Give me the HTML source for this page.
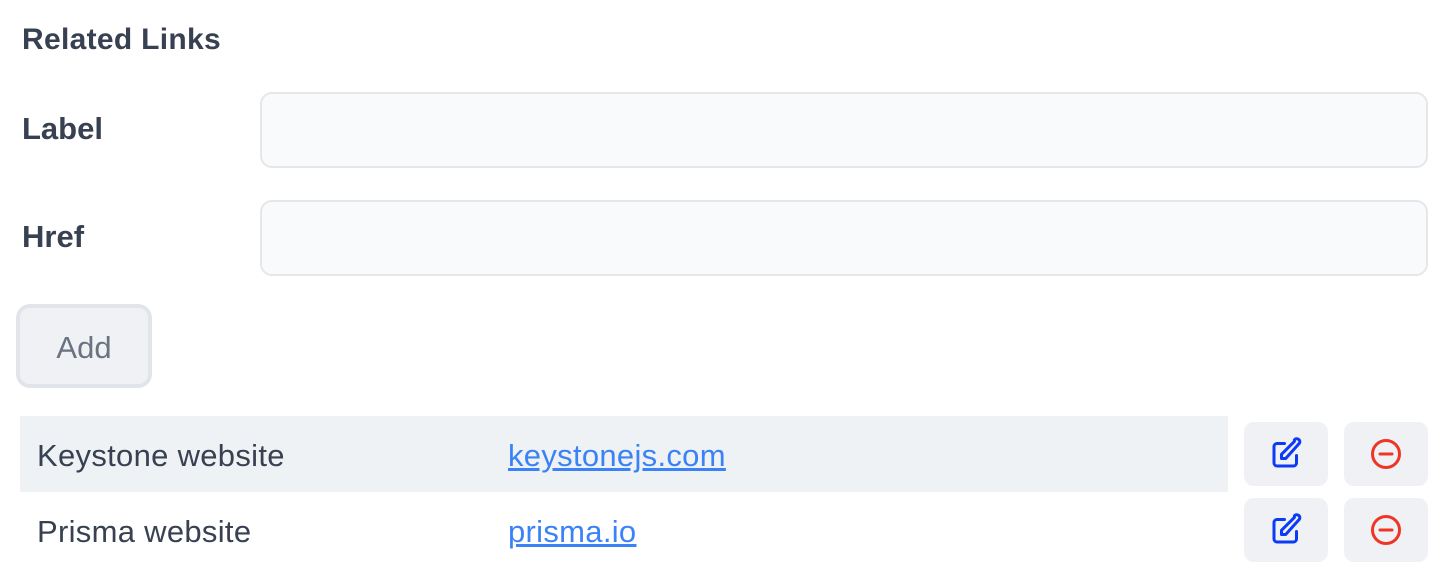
<!DOCTYPE html>
<html><head><style>
body{margin:0;width:1446px;height:588px;background:#fff;font-family:"Liberation Sans",sans-serif;color:#374151;position:relative;overflow:hidden}
.a{position:absolute}
.h{left:22px;top:22px;font-size:30px;font-weight:bold;line-height:36px;letter-spacing:0.3px}
.lbl{left:22px;font-size:31px;font-weight:bold}
.in{left:260px;width:1168px;height:76px;background:#f9fafb;border:2px solid #e5e7eb;border-radius:12px;box-sizing:border-box}
.btn{left:16px;top:304px;width:136px;height:84px;box-sizing:border-box;background:#eff1f5;border:4px solid #e1e5ea;border-radius:14px;color:#6b7280;font-size:31px;text-align:center;line-height:80px}
.row{left:20px;width:1208px;height:76px;font-size:31px;line-height:80px;letter-spacing:0.3px}
.row span{position:absolute;left:17px}
.row a{position:absolute;left:488px;color:#3b82f6;text-decoration:underline}
.ib{width:84px;height:64px;background:#eff1f5;border-radius:10px;display:flex;align-items:center;justify-content:center}
</style></head><body>
<div class="a h">Related Links</div>
<div class="a lbl" style="top:111px">Label</div>
<div class="a in" style="top:92px"></div>
<div class="a lbl" style="top:219px">Href</div>
<div class="a in" style="top:200px"></div>
<div class="a btn">Add</div>
<div class="a row" style="top:416px;background:#eff2f5"><span>Keystone website</span><a>keystonejs.com</a></div>
<div class="a row" style="top:492px"><span>Prisma website</span><a>prisma.io</a></div>
<svg width="0" height="0" style="position:absolute"><defs>
<symbol id="e" viewBox="0 0 24 24"><path d="M11 5H6a2 2 0 0 0-2 2v11a2 2 0 0 0 2 2h11a2 2 0 0 0 2-2v-5m-1.4-10.4a2 2 0 1 1 2.8 2.8L11.8 15H9v-2.8l8.6-8.6z" fill="none" stroke="#0b3bf5" stroke-width="2" stroke-linecap="round" stroke-linejoin="round"/></symbol>
<symbol id="m" viewBox="0 0 24 24"><circle cx="12" cy="12" r="9" fill="none" stroke="#ef3526" stroke-width="2"/><path d="M8 12h8" stroke="#ef3526" stroke-width="2" stroke-linecap="round"/></symbol>
</defs></svg>
<div class="a ib" style="left:1244px;top:422px"><svg width="36" height="36"><use href="#e"/></svg></div>
<div class="a ib" style="left:1344px;top:422px"><svg width="36" height="36"><use href="#m"/></svg></div>
<div class="a ib" style="left:1244px;top:498px"><svg width="36" height="36"><use href="#e"/></svg></div>
<div class="a ib" style="left:1344px;top:498px"><svg width="36" height="36"><use href="#m"/></svg></div>
</body></html>
